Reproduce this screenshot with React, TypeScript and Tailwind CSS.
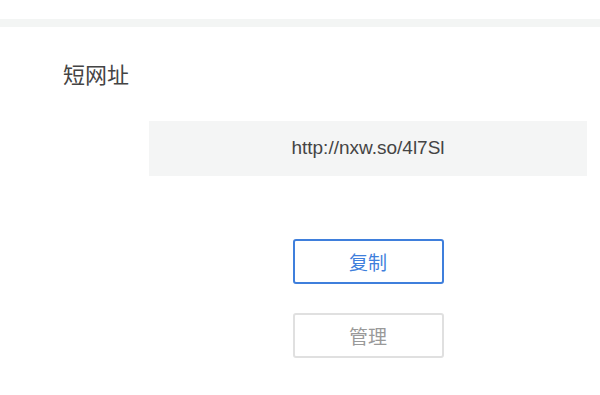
export default function App() {
  return (
    <div className="w-[600px] h-[395px] bg-white font-['Liberation_Sans','Noto_Sans_CJK_SC',sans-serif] overflow-hidden">
      <div className="h-[19px]" />
      <div className="h-[8px] bg-[#f3f5f4]" />
      <div className="pl-[63px] pt-[32px]">
        <h2 className="text-[22px] leading-[28px] text-[#444] font-['Noto_Sans_CJK_SC',sans-serif]">短网址</h2>
      </div>
      <div className="pl-[149px] pr-[13px] mt-[34px]">
        <div className="h-[55px] bg-[#f4f5f5] flex items-center justify-center text-[19px] text-[#444]">
          http://nxw.so/4l7Sl
        </div>
        <div className="flex flex-col items-center mt-[63px] gap-[29px]">
          <button className="w-[151px] h-[45px] rounded-[3px] border-2 border-[#3f7fdc] text-[#3f7fdc] text-[19px] leading-none font-['Noto_Sans_CJK_SC',sans-serif] bg-white">
            复制
          </button>
          <button className="w-[151px] h-[45px] rounded-[3px] border-2 border-[#e0e0e0] text-[#999] text-[19px] leading-none font-['Noto_Sans_CJK_SC',sans-serif] bg-white">
            管理
          </button>
        </div>
      </div>
    </div>
  );
}
